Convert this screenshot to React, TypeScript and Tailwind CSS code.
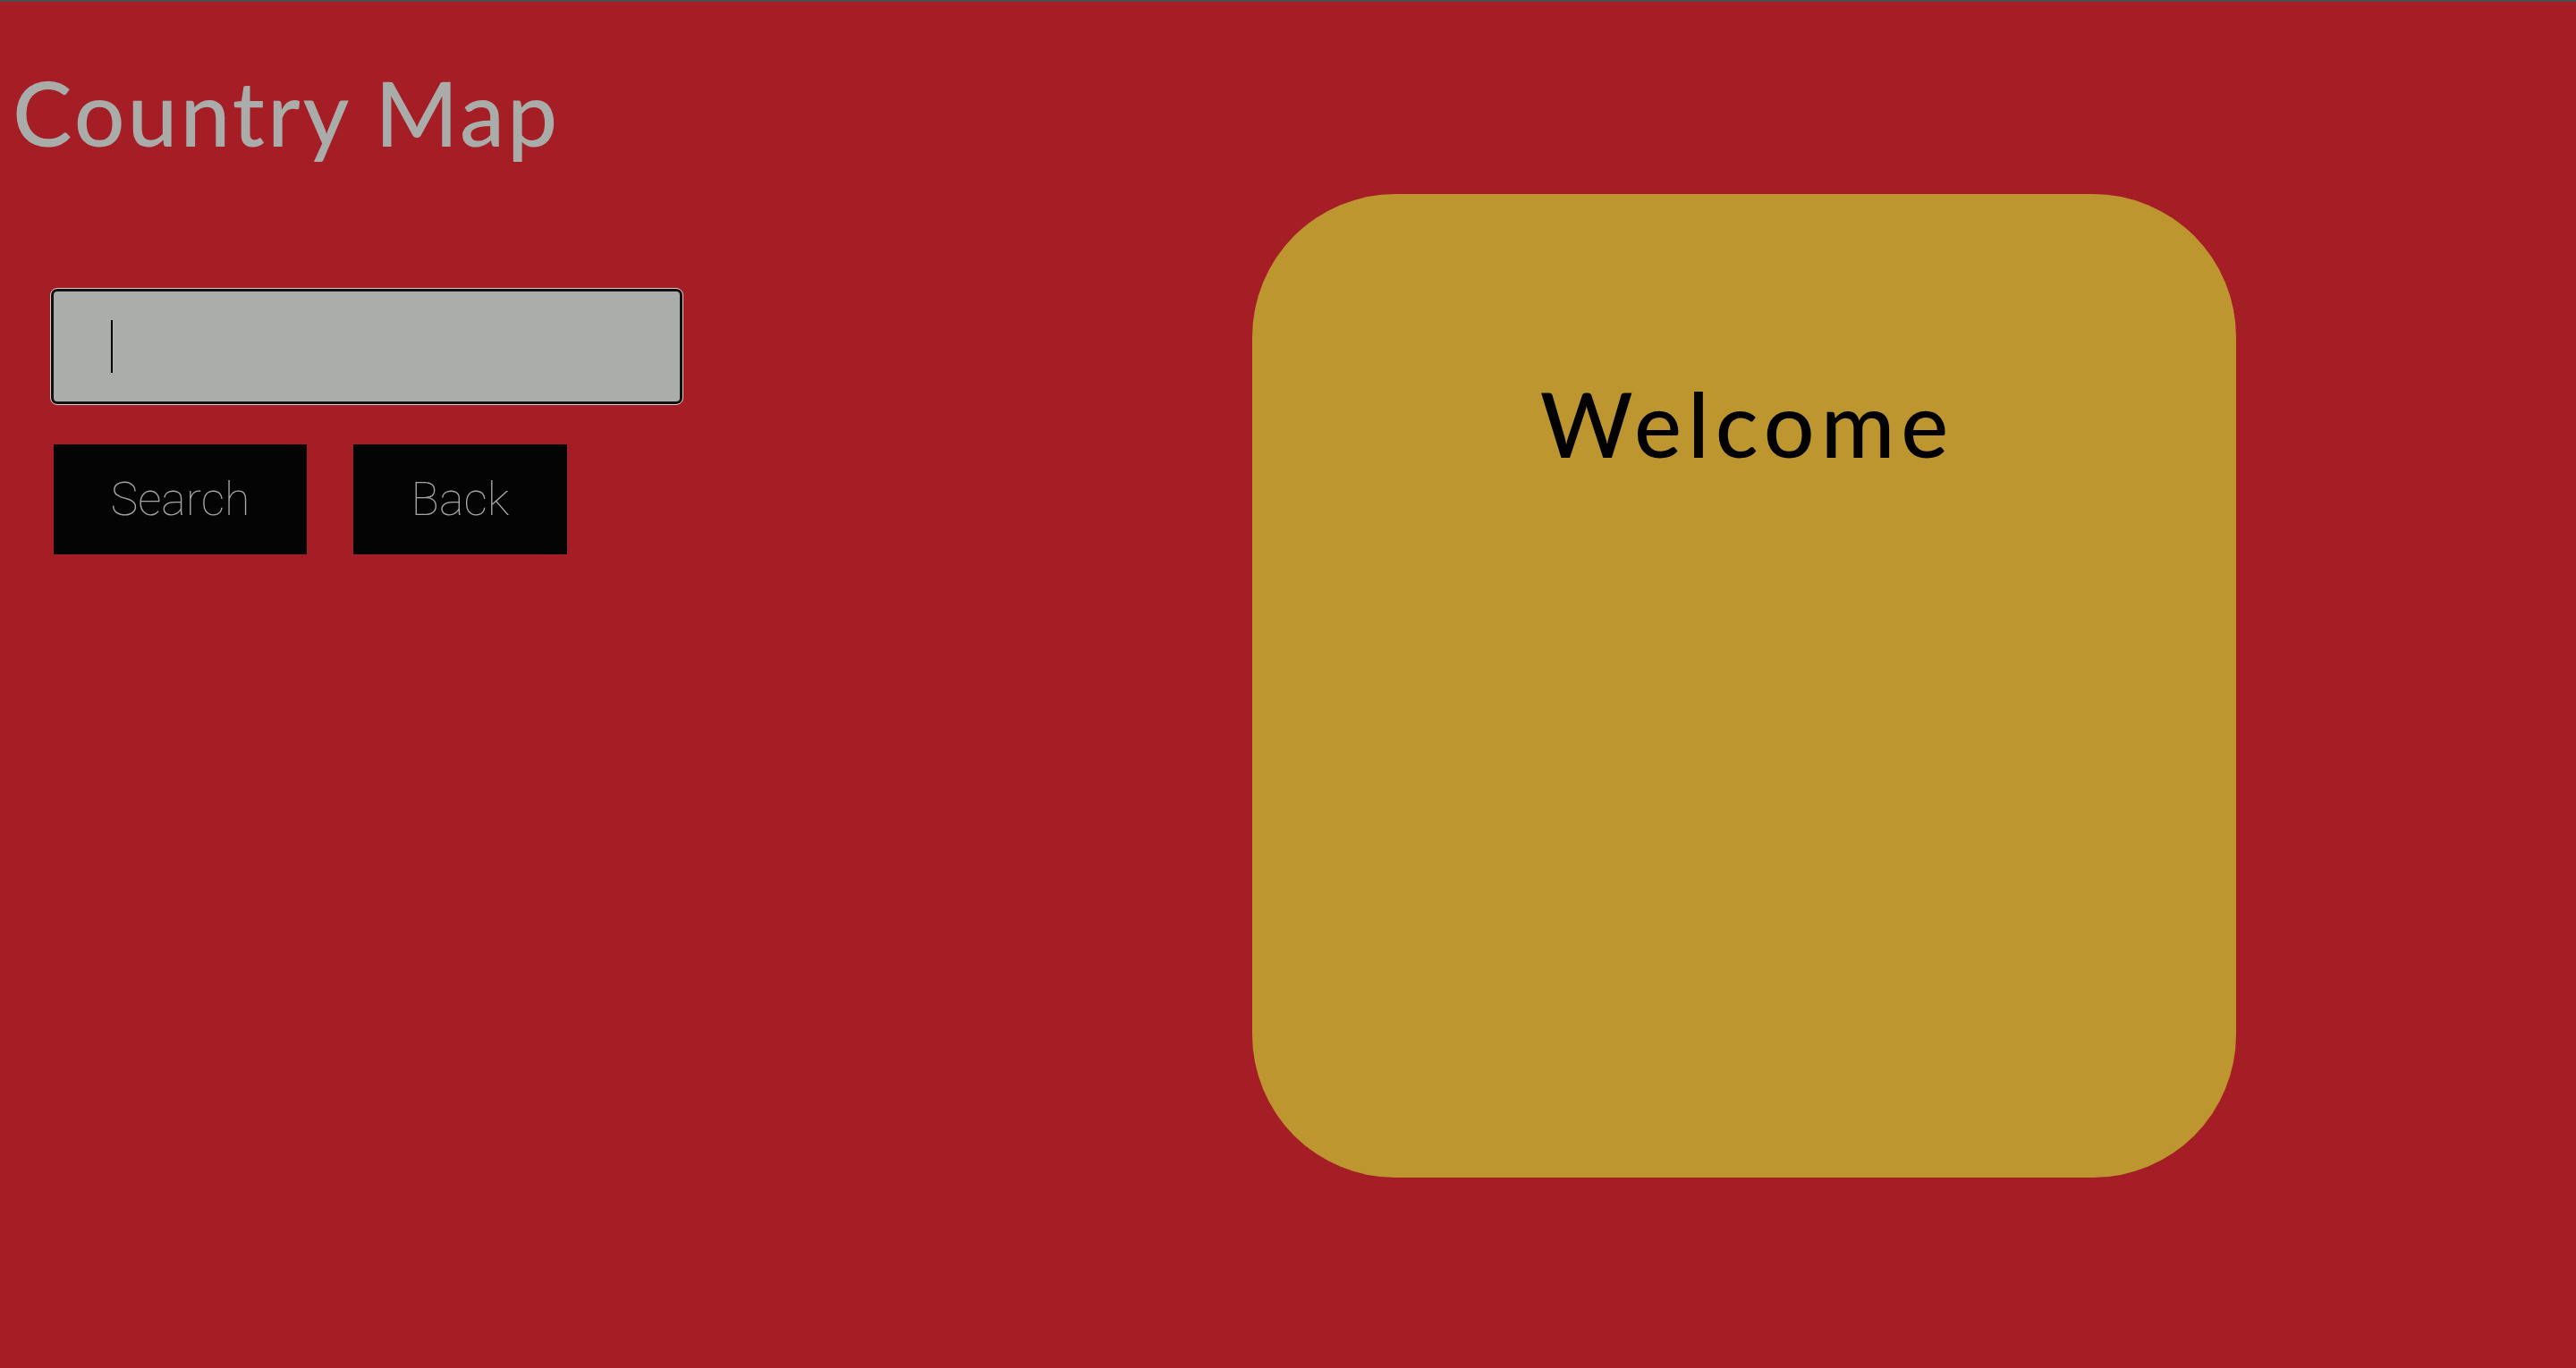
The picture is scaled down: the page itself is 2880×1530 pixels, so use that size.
export default function App() {
  return (
    <div className="min-h-screen border-t-2 border-[#4d4d4d] bg-[#a51e26] font-['Lato','Open_Sans',sans-serif]">
      <h1 className="pl-[14px] pt-[73px] text-[100px] font-medium leading-none tracking-[3px] text-[#a9aca8]">
        Country Map
      </h1>

      <div className="mt-[42px] flex items-start pl-[56px]">
        <div className="flex w-[708px] flex-col pt-[106px]">
          <div className="relative ml-[1px] w-[706px]">
            <input
              type="text"
              aria-label="Country"
              className="h-[129px] w-full rounded-[7px] border-[3px] border-[#111] bg-[#aaada9] pl-[66px] text-[48px] text-black caret-transparent outline outline-1 outline-[#cfcfcf]"
            />
            <span className="pointer-events-none absolute left-[67px] top-[35px] h-[59px] w-[2px] bg-black" />
          </div>

          <div className="mt-[45px] flex gap-[52px] pl-[4px]">
            <button
              type="button"
              className="flex h-[123px] w-[283px] items-center justify-center bg-[#040404] font-['Roboto',sans-serif] text-[52px] font-thin text-[#a6a6a6]"
            >
              Search
            </button>
            <button
              type="button"
              className="flex h-[123px] w-[239px] items-center justify-center bg-[#040404] font-['Roboto',sans-serif] text-[52px] font-thin text-[#a6a6a6]"
            >
              Back
            </button>
          </div>
        </div>

        <div className="ml-[636px] flex h-[1100px] w-[1100px] shrink-0 flex-col items-center rounded-[160px] bg-[#bd9630] pt-[206px]">
          <h2 className="pl-[7px] text-[100px] font-medium leading-none tracking-[7px] text-black">Welcome</h2>
        </div>
      </div>
    </div>
  );
}
